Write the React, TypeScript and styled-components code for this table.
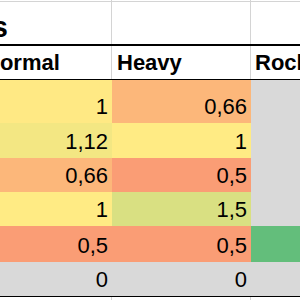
import React from "react";
import styled, { createGlobalStyle } from "styled-components";

const Global = createGlobalStyle`
  html, body { margin: 0; padding: 0; background: #ffffff; overflow: hidden; }
  body { font-family: "Liberation Sans", Arial, sans-serif; color: #000; }
`;

const Sheet = styled.div`
  margin-left: -200px;
  width: 651px;
  display: flex;
  flex-direction: column;
`;

const Row = styled.div<{ $h: number; $border?: string }>`
  display: grid;
  grid-template-columns: 312px 139px 200px;
  height: ${(p) => p.$h}px;
  box-sizing: border-box;
  border-bottom: ${(p) => p.$border ?? "none"};
`;

const GridCell = styled.div`
  box-sizing: border-box;
  border-right: 1px solid #d4d4d4;
  height: 100%;
`;

const TitleCell = styled(GridCell)`
  display: flex;
  align-items: flex-end;
  padding-bottom: 0;
`;

const TitleText = styled.div`
  width: 208px;
  text-align: right;
  white-space: nowrap;
  overflow: hidden;
  font-size: 29px;
  line-height: 34px;
  font-weight: 700;
`;

const HeadCell = styled(GridCell)<{ $pad: number }>`
  display: flex;
  align-items: flex-end;
  padding-left: ${(p) => p.$pad}px;
  padding-bottom: 3px;
  font-size: 22px;
  line-height: 26px;
  font-weight: 700;
  white-space: nowrap;
`;

const DataCell = styled.div<{ $bg: string }>`
  box-sizing: border-box;
  height: 100%;
  background: ${(p) => p.$bg};
  display: flex;
  align-items: flex-end;
  justify-content: flex-end;
  padding-right: 4px;
  padding-bottom: 5px;
  font-size: 22px;
  line-height: 22px;
`;

type Cell = { v: string; bg: string };
const rows: { h: number; cells: Cell[] }[] = [
  { h: 43, cells: [{ v: "1", bg: "#ffe984" }, { v: "0,66", bg: "#fcb77a" }, { v: "", bg: "#d9d9d9" }] },
  { h: 35, cells: [{ v: "1,12", bg: "#f3e783" }, { v: "1", bg: "#ffeb84" }, { v: "", bg: "#d9d9d9" }] },
  { h: 34, cells: [{ v: "0,66", bg: "#fcb77a" }, { v: "0,5", bg: "#fa9d75" }, { v: "", bg: "#d9d9d9" }] },
  { h: 34, cells: [{ v: "1", bg: "#ffeb84" }, { v: "1,5", bg: "#d9e082" }, { v: "", bg: "#d9d9d9" }] },
  { h: 36, cells: [{ v: "0,5", bg: "#fa9d75" }, { v: "0,5", bg: "#fa9d75" }, { v: "", bg: "#63be7b" }] },
  { h: 35, cells: [{ v: "0", bg: "#d9d9d9" }, { v: "0", bg: "#d9d9d9" }, { v: "", bg: "#d9d9d9" }] },
];

export default function App() {
  return (
    <>
      <Global />
      <Sheet>
        <Row $h={2} $border="1px solid #d4d4d4">
          <GridCell />
          <GridCell />
          <GridCell />
        </Row>
        <Row $h={44} $border="2px solid #000">
          <TitleCell>
            <TitleText>Types</TitleText>
          </TitleCell>
          <GridCell />
          <GridCell />
        </Row>
        <Row $h={34} $border="1px solid #000">
          <HeadCell $pad={184}>Normal</HeadCell>
          <HeadCell $pad={5}>Heavy</HeadCell>
          <HeadCell $pad={4}>Rock</HeadCell>
        </Row>
        {rows.map((r, i) => (
          <Row key={i} $h={r.h} $border={i === rows.length - 1 ? "1px solid #000" : undefined}>
            {r.cells.map((c, j) => (
              <DataCell key={j} $bg={c.bg}>
                {c.v}
              </DataCell>
            ))}
          </Row>
        ))}
        <Row $h={20}>
          <GridCell />
          <GridCell />
          <GridCell />
        </Row>
      </Sheet>
    </>
  );
}
